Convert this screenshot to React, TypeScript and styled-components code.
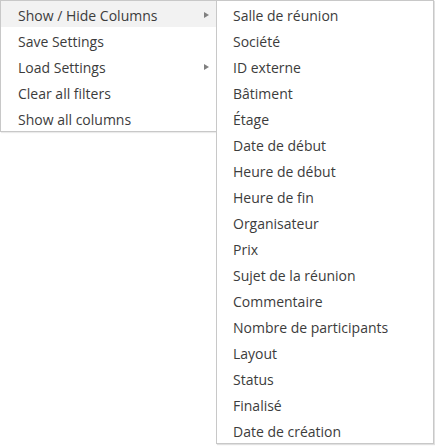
import React from 'react';
import styled, { createGlobalStyle } from 'styled-components';

const GlobalStyle = createGlobalStyle`
  html, body {
    margin: 0;
    padding: 0;
    background: #fff;
  }
  body {
    font-family: 'Open Sans', 'Noto Sans', 'DejaVu Sans', sans-serif;
    font-size: 14px;
    color: #3c3c3c;
  }
`;

const Wrap = styled.div`
  display: flex;
  align-items: flex-start;
  width: 435px;
  height: 446px;
`;

const Menu = styled.ul`
  box-sizing: border-box;
  width: 217px;
  flex: none;
  margin: 0;
  padding: 0;
  list-style: none;
  background: #fff;
  border: 1px solid #c8c8c8;
  box-shadow: 1px 1px 1px rgba(0, 0, 0, 0.08);
`;

const Item = styled.li<{ $active?: boolean }>`
  display: flex;
  align-items: center;
  justify-content: space-between;
  box-sizing: border-box;
  height: 26px;
  padding: 2px 7px 0 17px;
  white-space: nowrap;
  background: ${(p) => (p.$active ? '#f2f2f2' : 'transparent')};
  cursor: default;
`;

const Arrow = styled.span`
  width: 0;
  height: 0;
  margin-top: -1px;
  border-top: 3px solid transparent;
  border-bottom: 3px solid transparent;
  border-left: 5px solid #808080;
`;

const SubMenu = styled.ul`
  position: relative;
  z-index: 1;
  box-sizing: border-box;
  width: 218px;
  flex: none;
  margin: 0 0 0 -1px;
  padding: 0;
  list-style: none;
  background: #fff;
  border: 1px solid #c8c8c8;
  box-shadow: 1px 1px 1px rgba(0, 0, 0, 0.12);
`;

const SubItem = styled.li`
  display: flex;
  align-items: center;
  box-sizing: border-box;
  height: 26px;
  padding: 2px 12px 0 16px;
  white-space: nowrap;
`;

const mainItems = [
  { label: 'Show / Hide Columns', sub: true, active: true },
  { label: 'Save Settings' },
  { label: 'Load Settings', sub: true },
  { label: 'Clear all filters' },
  { label: 'Show all columns' },
];

const columns = [
  'Salle de réunion',
  'Société',
  'ID externe',
  'Bâtiment',
  'Étage',
  'Date de début',
  'Heure de début',
  'Heure de fin',
  'Organisateur',
  'Prix',
  'Sujet de la réunion',
  'Commentaire',
  'Nombre de participants',
  'Layout',
  'Status',
  'Finalisé',
  'Date de création',
];

export default function App() {
  return (
    <>
      <GlobalStyle />
      <Wrap>
        <Menu>
          {mainItems.map((it) => (
            <Item key={it.label} $active={it.active}>
              <span>{it.label}</span>
              {it.sub && <Arrow />}
            </Item>
          ))}
        </Menu>
        <SubMenu>
          {columns.map((c) => (
            <SubItem key={c}>{c}</SubItem>
          ))}
        </SubMenu>
      </Wrap>
    </>
  );
}
